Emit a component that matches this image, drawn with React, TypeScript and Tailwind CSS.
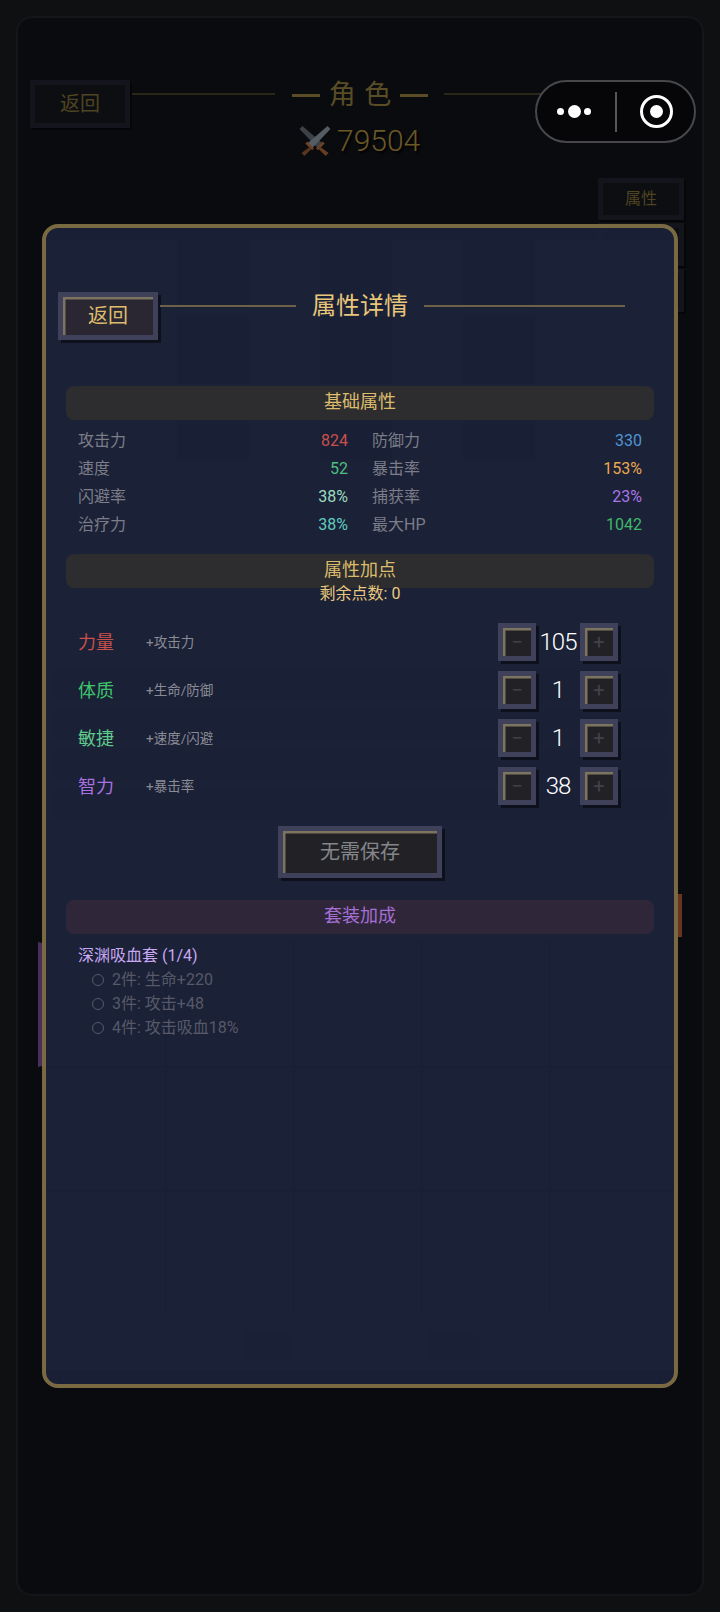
import React from "react";

const Bevel = ({ className, children }: { className: string; children: React.ReactNode }) => (
  <div className={`flex items-center justify-center border-[5px] border-[#3e4159] shadow-[inset_2.5px_2.5px_0_#7d7460,3px_3px_0_#0e101b] ${className}`}>
    {children}
  </div>
);

const DimBtn = ({ className, children }: { className: string; children?: React.ReactNode }) => (
  <div className={`flex items-center justify-center border-[5px] border-[#14151c] bg-[#0d0e11] text-[#4f4422] shadow-[2px_2px_0_#050608] ${className}`}>
    {children}
  </div>
);

const Swords = () => (
  <svg width="32" height="30" viewBox="0 0 32 31" className="shrink-0">
    <path d="M3 0 L0 3 L19 23 L24 18 Z" fill="#3c4147" />
    <path d="M29 0 L32 3 L13 23 L8 18 Z" fill="#565c63" />
    <path d="M8 16 L15 23 L13 25 L6 18 Z M24 16 L17 23 L19 25 L26 18 Z" fill="#6a4226" />
    <path d="M10 22 L12 24 L5 31 L2 28 Z" fill="#5a341d" />
    <path d="M22 22 L20 24 L27 31 L30 28 Z" fill="#673d22" />
  </svg>
);

const Section = ({ purple, children }: { purple?: boolean; children: React.ReactNode }) => (
  <div
    className={`flex h-[34px] items-center justify-center rounded-lg pb-[3px] text-[18px] ${
      purple ? "bg-[#30263a] text-[#a56fd6]" : "bg-[#2d2d2f] text-[#dcbc6c]"
    }`}
  >
    {children}
  </div>
);

const stats: [string, string, string][] = [
  ["攻击力", "824", "text-[#c9504c]"],
  ["防御力", "330", "text-[#4f94d4]"],
  ["速度", "52", "text-[#4fbf80]"],
  ["暴击率", "153%", "text-[#eba74f]"],
  ["闪避率", "38%", "text-[#9bdcc0]"],
  ["捕获率", "23%", "text-[#aa75e6]"],
  ["治疗力", "38%", "text-[#5fcdc0]"],
  ["最大HP", "1042", "text-[#3fb868]"],
];

const attrs: [string, string, string, string][] = [
  ["力量", "+攻击力", "105", "text-[#c9504c]"],
  ["体质", "+生命/防御", "1", "text-[#3fc46c]"],
  ["敏捷", "+速度/闪避", "1", "text-[#5fc98c]"],
  ["智力", "+暴击率", "38", "text-[#a872e0]"],
];

const bonuses = ["2件: 生命+220", "3件: 攻击+48", "4件: 攻击吸血18%"];

const Stepper = ({ glyph }: { glyph: string }) => (
  <Bevel className="size-[38px] bg-[#222226] text-[20px] leading-none text-[#414249]">{glyph}</Bevel>
);

export default function App() {
  return (
    <div className="relative h-[1612px] w-[720px] overflow-hidden bg-[#0f1012] p-4 font-['Roboto','Noto_Sans_CJK_SC',sans-serif]">
      {/* dimmed page behind the dialog */}
      <div className="flex h-[1580px] flex-col rounded-2xl border-2 border-[#14161a] bg-[#0a0b0e]">
        <div className="ml-3 mt-[62px] flex items-start">
          <DimBtn className="h-12 w-[100px] text-[20px]">返回</DimBtn>
          <div className="ml-0.5 mt-[13px] h-0.5 w-[143px] bg-[#2b2618]" />
          <div className="ml-[17px] flex h-[30px] w-[136px] items-center justify-between text-[27px] leading-none text-[#5a4d26]">
            <div className="h-[3px] w-7 bg-[#5a4d26]" />
            <span>角</span>
            <span>色</span>
            <div className="h-[3px] w-7 bg-[#5a4d26]" />
          </div>
          <div className="ml-4 mt-[13px] h-0.5 w-[208px] bg-[#2b2618]" />
        </div>
        <div className="-mt-[7px] ml-[281px] flex items-center gap-1.5">
          <Swords />
          <span className="text-[30px] font-light leading-10 text-[#6a5826] [text-shadow:2px_2px_2px_#000]">79504</span>
        </div>
        <div className="mr-[18px] mt-[17px] flex flex-col items-end gap-[3px] text-[16px]">
          <DimBtn className="h-[42px] w-[86px]">属性</DimBtn>
          <DimBtn className="h-[43px] w-[86px]" />
          <DimBtn className="h-[43px] w-[86px]" />
        </div>

        {/* content hidden behind the translucent dialog */}
        <div className="-mt-[72px] ml-6 flex h-[1130px] w-[636px] flex-col bg-[#1a1c24]">
          <div className="ml-[135px] grid w-[358px] grid-cols-3 gap-x-[71px] gap-y-2">
            {Array.from({ length: 9 }).map((_, i) => (
              <div key={i} className="h-[68px] bg-[#0a0b0e]" />
            ))}
          </div>
          <div className="mx-2 mt-[210px] flex flex-col gap-2">
            {Array.from({ length: 4 }).map((_, i) => (
              <div key={i} className="h-8 bg-[#14161c]" />
            ))}
          </div>
          <div className="-mr-1 ml-auto mt-[72px] h-[43px] w-1 shrink-0 bg-[#6b3322]" />
          <div className="-ml-1 mt-[5px] grid w-[640px] grid-cols-5 grid-rows-3">
            {Array.from({ length: 15 }).map((_, i) => (
              <div
                key={i}
                className={`h-[124.6px] border border-[#0a0b0e] ${i === 0 ? "border-l-4 border-l-[#4a2f5a]" : ""}`}
              />
            ))}
          </div>
          <div className="ml-[201px] mt-[14px] flex gap-[134px]">
            <div className="h-[30px] w-[51px] bg-[#12141a]" />
            <div className="h-[30px] w-[51px] bg-[#12141a]" />
          </div>
        </div>
      </div>

      {/* WeChat capsule */}
      <div className="absolute left-[535px] top-20 flex h-[63px] w-[161px] items-center rounded-full border-2 border-[#47484b] bg-[#060608]">
        <div className="flex w-[78px] items-center justify-center gap-[3.5px] pr-1">
          <span className="size-[7px] rounded-full bg-white" />
          <span className="size-[13px] rounded-full bg-white" />
          <span className="size-[7px] rounded-full bg-white" />
        </div>
        <div className="h-10 w-0.5 bg-[#55565a]" />
        <div className="ml-[23px] flex size-[33px] items-center justify-center rounded-full border-[3.5px] border-white">
          <span className="size-[13px] rounded-full bg-white" />
        </div>
      </div>

      {/* dialog */}
      <div className="absolute left-[42px] top-[224px] h-[1164px] w-[636px] rounded-2xl border-4 border-[#7a6a42] bg-[#1b223a]/[0.88] px-5 pt-16">
        <div className="-ml-2 flex items-start">
          <Bevel className="h-12 w-[100px] bg-[#2a2733] text-[20px] text-[#dcbc6c]">返回</Bevel>
          <div className="ml-0.5 mt-[13px] h-0.5 w-[136px] bg-[#6f6048]" />
          <div className="w-[128px] text-center text-[24px] leading-7 text-[#e8c67a]">属性详情</div>
          <div className="mt-[13px] h-0.5 w-[201px] bg-[#6f6048]" />
        </div>

        <div className="mt-[46px]">
          <Section>基础属性</Section>
        </div>
        <div className="mt-[7px] grid grid-cols-2 gap-x-6 px-3">
          {stats.map(([label, value, color]) => (
            <div key={label} className="flex h-7 items-center justify-between text-[16px]">
              <span className="text-[#7b7d88]">{label}</span>
              <span className={color}>{value}</span>
            </div>
          ))}
        </div>

        <div className="mt-[15px]">
          <Section>属性加点</Section>
        </div>
        <div className="-mt-1 text-center text-[16px] leading-5 text-[#ecc97a]">剩余点数: 0</div>

        <div className="mt-[19px] flex flex-col gap-2.5 px-3">
          {attrs.map(([name, desc, value, color]) => (
            <div key={name} className="flex h-[38px] items-center">
              <span className={`w-[68px] text-[18px] ${color}`}>{name}</span>
              <span className="text-[13.5px] text-[#8a8c95]">{desc}</span>
              <div className="ml-auto mr-6 flex items-center">
                <Stepper glyph="−" />
                <span className="w-11 text-center text-[24px] font-light tracking-[-1px] text-white">{value}</span>
                <Stepper glyph="+" />
              </div>
            </div>
          ))}
        </div>

        <div className="mt-[21px] flex justify-center">
          <Bevel className="h-[52px] w-[164px] bg-[#222226] text-[20px] text-[#85868c]">无需保存</Bevel>
        </div>

        <div className="mt-[22px]">
          <Section purple>套装加成</Section>
        </div>
        <div className="mt-2.5 pl-3 text-[16px] leading-6">
          <div className="text-[#c8a8f2]">深渊吸血套 (1/4)</div>
          {bonuses.map((b) => (
            <div key={b} className="ml-[14px] flex items-center gap-2 text-[#565968]">
              <span className="size-3 rounded-full border border-[#565968]" />
              <span>{b}</span>
            </div>
          ))}
        </div>
      </div>
    </div>
  );
}
